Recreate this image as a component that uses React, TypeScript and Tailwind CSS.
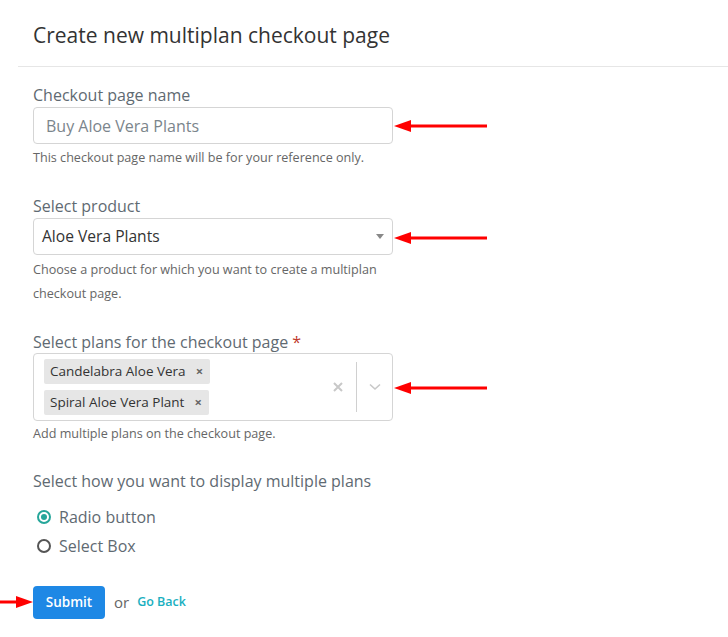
import React from "react";

function Arrow({ className }: { className: string }) {
  return (
    <svg className={`absolute ${className}`} width="94" height="14" viewBox="0 0 94 14">
      <line x1="14" y1="7" x2="93" y2="7" stroke="#ff0000" strokeWidth="3" />
      <polygon points="0,7 17,1 17,13" fill="#ff0000" />
    </svg>
  );
}

export default function App() {
  return (
    <div className="relative w-[728px] h-[637px] bg-white overflow-hidden" style={{ fontFamily: '"Open Sans", sans-serif' }}>
      <div className="pl-[33px] pt-[21px] pb-[16px] text-[21px] leading-[29px] text-[#333]">
        Create new multiplan checkout page
      </div>
      <div className="ml-[18px] border-t border-[#e6e6e6]" />
      <div className="pl-[33px] w-[393px] pt-[17px]">
        <div className="text-[16px] leading-[22px] text-[#5f6a72]">Checkout page name</div>
        <div className="mt-[1px] h-[37px] border border-[#d5d5d5] rounded-[4px] flex items-center pl-[12px] text-[16px] text-[#7b858c]">
          Buy Aloe Vera Plants
        </div>
        <div className="mt-[5px] text-[12.6px] leading-[18px] text-[#666]">This checkout page name will be for your reference only.</div>

        <div className="mt-[28px] text-[16px] leading-[22px] text-[#5f6a72]">Select product</div>
        <div className="mt-[1px] h-[37px] border border-[#d5d5d5] rounded-[4px] flex items-center pl-[8px] pr-[8px] text-[15.6px] text-[#333]">
          <span className="flex-1">Aloe Vera Plants</span>
          <svg width="8" height="5" viewBox="0 0 8 5"><polygon points="0,0 8,0 4,5" fill="#888" /></svg>
        </div>
        <div className="mt-[3px] text-[12.6px] leading-[24px] text-[#666] w-[360px]">Choose a product for which you want to create a multiplan checkout page.</div>

        <div className="mt-[25px] text-[16px] leading-[22px] text-[#5f6a72]">
          Select plans for the checkout page <span className="text-[#c0392b]">*</span>
        </div>
        <div className="h-[68px] border border-[#d5d5d5] rounded-[4px] flex items-center pl-[10px]">
          <div className="flex-1 flex flex-col gap-[6px]">
            <div className="self-start h-[25px] bg-[#e6e6e6] rounded-[2px] flex items-center pl-[6px] pr-[7px] text-[13.5px] text-[#333]">
              Candelabra Aloe Vera<span className="ml-[10px] text-[13px] text-[#666] font-bold">×</span>
            </div>
            <div className="self-start h-[25px] bg-[#e6e6e6] rounded-[2px] flex items-center pl-[6px] pr-[7px] text-[13.5px] text-[#333]">
              Spiral Aloe Vera Plant<span className="ml-[10px] text-[13px] text-[#666] font-bold">×</span>
            </div>
          </div>
          <div className="flex items-center h-[50px]">
            <svg width="10" height="10" viewBox="0 0 10 10" className="mr-[13px]"><path d="M1 1 L9 9 M9 1 L1 9" stroke="#c8c8c8" strokeWidth="2" /></svg>
            <div className="w-px h-[50px] bg-[#d0d0d0]" />
            <svg width="12" height="8" viewBox="0 0 12 8" className="ml-[12px] mr-[11px]"><path d="M1 1.5 L6 6 L11 1.5" stroke="#c8c8c8" strokeWidth="1.6" fill="none" /></svg>
          </div>
        </div>
        <div className="mt-[4px] text-[12.6px] leading-[18px] text-[#666]">Add multiple plans on the checkout page.</div>

        <div className="mt-[27px] text-[16px] leading-[22px] text-[#5f6a72] whitespace-nowrap">Select how you want to display multiple plans</div>
        <div className="mt-[14px] flex items-center h-[22px] text-[16px] text-[#5f6a72]">
          <span className="ml-[4px] w-[14px] h-[14px] rounded-full border-2 border-[#26a69a] flex items-center justify-center">
            <span className="w-[6px] h-[6px] rounded-full bg-[#26a69a]" />
          </span>
          <span className="ml-[8px]">Radio button</span>
        </div>
        <div className="mt-[7px] flex items-center h-[22px] text-[16px] text-[#5f6a72]">
          <span className="ml-[4px] w-[14px] h-[14px] rounded-full border-2 border-[#555]" />
          <span className="ml-[8px]">Select Box</span>
        </div>

        <div className="mt-[29px] flex items-center">
          <div className="h-[33px] w-[72px] bg-[#1e88e5] rounded-[4px] flex items-center justify-center text-white text-[13.5px] font-semibold">Submit</div>
          <span className="ml-[9px] text-[15px] text-[#666]">or</span>
          <span className="ml-[8px] text-[12.5px] font-semibold text-[#1aafc0]">Go Back</span>
        </div>
      </div>

      <Arrow className="left-[394px] top-[119px]" />
      <Arrow className="left-[394px] top-[231px]" />
      <Arrow className="left-[394px] top-[381px]" />
      <svg className="absolute left-0 top-[595px]" width="34" height="14" viewBox="0 0 34 14">
        <line x1="0" y1="7" x2="20" y2="7" stroke="#ff0000" strokeWidth="3" />
        <polygon points="33,7 16,1 16,13" fill="#ff0000" />
      </svg>
    </div>
  );
}
